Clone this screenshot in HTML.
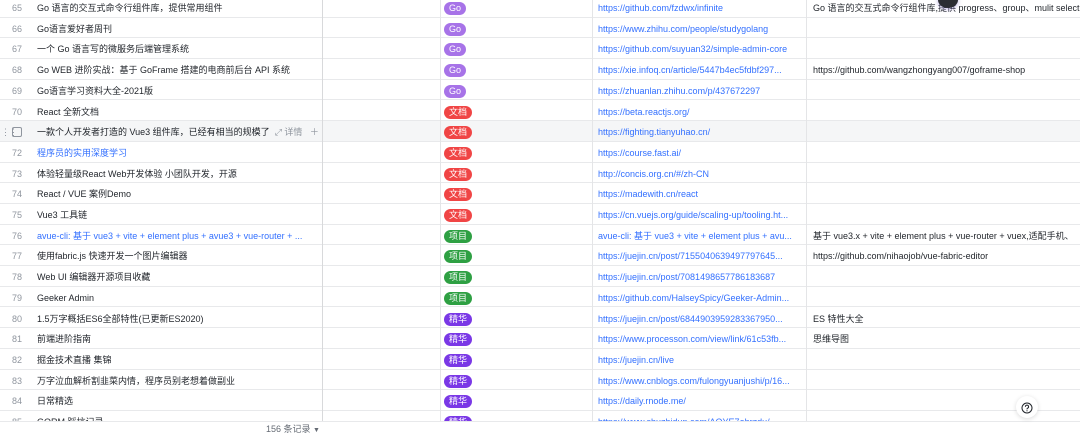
<!DOCTYPE html>
<html><head><meta charset="utf-8"><style>
*{margin:0;padding:0;box-sizing:border-box}
body{width:1080px;height:436px;overflow:hidden;background:#fff;font-family:"Liberation Sans","Noto Sans CJK SC",sans-serif;font-size:9px;color:#1f2329;position:relative}
.row{position:absolute;left:0;width:1080px;height:20.7px;border-bottom:1px solid #e8e9eb}
.row.h{background:#f5f6f7}
.c{position:absolute;top:0;line-height:23px;white-space:nowrap;overflow:hidden}
.n{left:12px;color:#8f959e;width:20px}
.t{left:37px;width:282px}
.blue{color:#3370ff}
.tag{position:absolute;left:444px;top:5px;height:13px;line-height:13px;border-radius:7px;color:#fff;padding:0 5px;font-size:9px}
.go{background:#a773e8}.doc{background:#f04545}.prj{background:#2ea043}.jh{background:#7a38e6}
.u{left:598px;width:205px;color:#3370ff;text-overflow:ellipsis}
.m{left:813px;width:267px;color:#1f2329}
.vl{position:absolute;top:0;height:421px;width:1px;background:#e4e5e7}
.footer{position:absolute;left:0;top:421px;width:1080px;height:15px;background:#fff;border-top:1px solid #e8e9eb}
</style></head><body>
<div id="rows"></div>
<script>
var d=[
[65,"Go 语言的交互式命令行组件库，提供常用组件","go","Go","https://github.com/fzdwx/infinite","Go 语言的交互式命令行组件库,提供 progress、group、mulit select"],
[66,"Go语言爱好者周刊","go","Go","https://www.zhihu.com/people/studygolang",""],
[67,"一个 Go 语言写的微服务后端管理系统","go","Go","https://github.com/suyuan32/simple-admin-core",""],
[68,"Go WEB 进阶实战：基于 GoFrame 搭建的电商前后台 API 系统","go","Go","https://xie.infoq.cn/article/5447b4ec5fdbf297...","https://github.com/wangzhongyang007/goframe-shop"],
[69,"Go语言学习资料大全-2021版","go","Go","https://zhuanlan.zhihu.com/p/437672297",""],
[70,"React 全新文档","doc","文档","https://beta.reactjs.org/",""],
[71,"一款个人开发者打造的 Vue3 组件库，已经有相当的规模了","doc","文档","https://fighting.tianyuhao.cn/",""],
[72,"程序员的实用深度学习","doc","文档","https://course.fast.ai/","",1],
[73,"体验轻量级React Web开发体验 小团队开发，开源","doc","文档","http://concis.org.cn/#/zh-CN",""],
[74,"React / VUE 案例Demo","doc","文档","https://madewith.cn/react",""],
[75,"Vue3 工具链","doc","文档","https://cn.vuejs.org/guide/scaling-up/tooling.ht...",""],
[76,"avue-cli: 基于 vue3 + vite + element plus + avue3 + vue-router + ...","prj","项目","avue-cli: 基于 vue3 + vite + element plus + avu...","基于 vue3.x + vite + element plus + vue-router + vuex,适配手机、",1],
[77,"使用fabric.js 快速开发一个图片编辑器","prj","项目","https://juejin.cn/post/7155040639497797645...","https://github.com/nihaojob/vue-fabric-editor"],
[78,"Web UI 编辑器开源项目收藏","prj","项目","https://juejin.cn/post/7081498657786183687",""],
[79,"Geeker Admin","prj","项目","https://github.com/HalseySpicy/Geeker-Admin...",""],
[80,"1.5万字概括ES6全部特性(已更新ES2020)","jh","精华","https://juejin.cn/post/6844903959283367950...","ES 特性大全"],
[81,"前端进阶指南","jh","精华","https://www.processon.com/view/link/61c53fb...","思维导图"],
[82,"掘金技术直播 集锦","jh","精华","https://juejin.cn/live",""],
[83,"万字泣血解析割韭菜内情，程序员别老想着做副业","jh","精华","https://www.cnblogs.com/fulongyuanjushi/p/16...",""],
[84,"日常精选","jh","精华","https://daily.rnode.me/",""],
[85,"GORM 踩坑记录","jh","精华","https://www.shuzhidun.com/AOYE7ahrzdu/",""]];
var h="";
d.forEach(function(r,i){
 var top=(-3+i*20.7).toFixed(1);
 var hov=r[0]==71;
 h+='<div class="row'+(hov?' h':'')+'" style="top:'+top+'px">';
 if(hov){h+='<div class="c" style="left:1px;color:#8f959e;font-size:9px;letter-spacing:-1px">⋮⋮</div><div style="position:absolute;left:12px;top:6px;width:10px;height:10px;border:1px solid #8f959e;border-radius:2px"></div>';}
 else h+='<div class="c n">'+r[0]+'</div>';
 h+='<div class="c t'+(r[6]?' blue':'')+'">'+r[1]+(hov?'<span style="color:#8f959e;margin-left:5px">⤢ 详情 &nbsp;&nbsp;＋</span>':'')+'</div>';
 h+='<span class="tag '+r[2]+'">'+r[3]+'</span>';
 h+='<div class="c u">'+r[4]+'</div>';
 h+='<div class="c m">'+r[5]+'</div></div>';
});
document.getElementById('rows').innerHTML=h;
</script>
<div class="vl" style="left:322px;background:#d8d9db"></div>
<div class="vl" style="left:440px"></div>
<div class="vl" style="left:592px"></div>
<div class="vl" style="left:806px"></div>
<div style="position:absolute;left:938px;top:-8px;width:20px;height:16px;border-radius:50%;background:#2b2d33;box-shadow:0 1px 4px rgba(120,100,200,.5)"></div>
<div class="footer"><div style="position:absolute;left:266px;top:1px;font-size:9px;color:#646a73;line-height:13px">156 条记录 <span style="font-size:7px">▼</span></div></div>
<div style="position:absolute;left:1016px;top:396px;width:22px;height:22px;border-radius:50%;background:#fff;box-shadow:0 1px 5px rgba(0,0,0,.15);text-align:center;line-height:22px">
<svg width="12" height="12" viewBox="0 0 12 12" style="vertical-align:middle"><circle cx="6" cy="6" r="5" fill="none" stroke="#1f2329" stroke-width="1"/><path d="M4.4 4.8a1.6 1.6 0 1 1 2.2 1.4c-.4.2-.6.5-.6.9v.3" fill="none" stroke="#1f2329" stroke-width="1"/><circle cx="6" cy="8.8" r=".6" fill="#1f2329"/></svg></div>
</body></html>
